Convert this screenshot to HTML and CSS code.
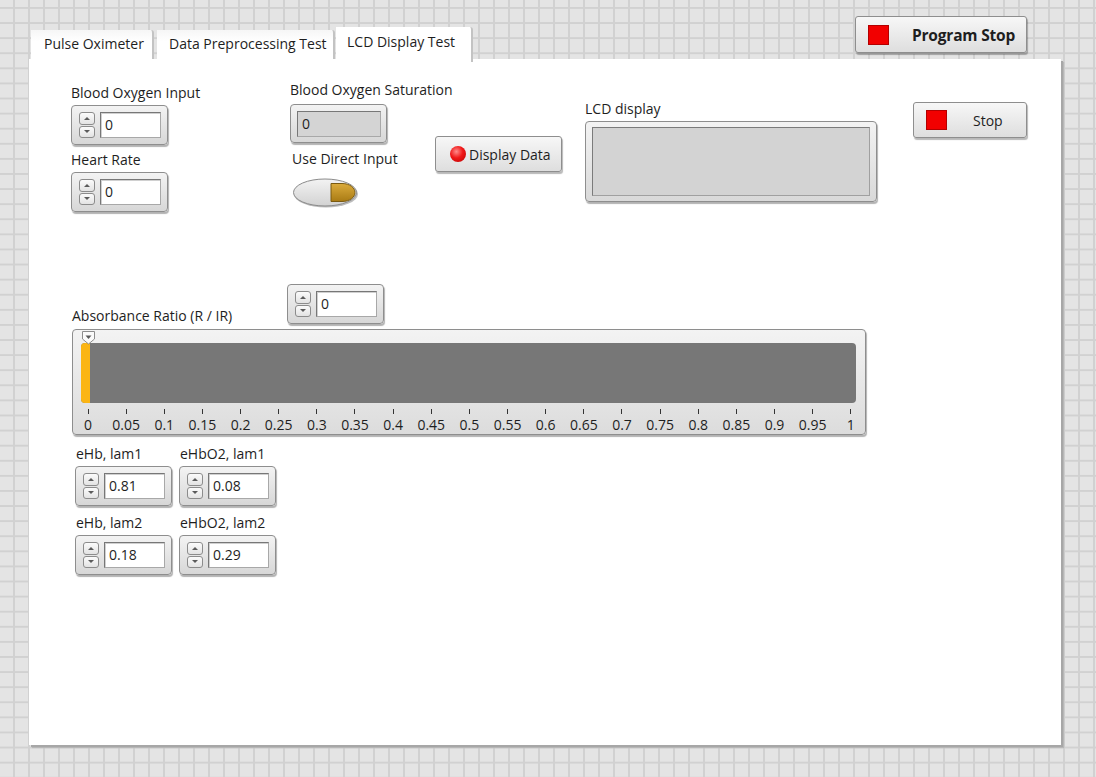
FILE: index.html
```html
<!DOCTYPE html>
<html>
<head>
<meta charset="utf-8">
<title>LCD Display Test</title>
<link rel="stylesheet" href="styles.css">
</head>
<body>
<div class="canvas">

  <button class="btn prog-stop"><span class="red-sq"></span><span class="prog-label">Program Stop</span></button>

  <div class="tabctl">
    <div class="tabrow">
      <div class="tab t1">Pulse Oximeter</div>
      <div class="tab t2">Data Preprocessing Test</div>
      <div class="tab t3 active">LCD Display Test</div>
    </div>
    <div class="panel">

      <div class="grp g-boi">
        <div class="lbl">Blood Oxygen Input</div>
        <div class="num">
          <div class="spin"><span class="sb up"></span><span class="sb dn"></span></div>
          <div class="field">0</div>
        </div>
      </div>

      <div class="grp g-hr">
        <div class="lbl">Heart Rate</div>
        <div class="num">
          <div class="spin"><span class="sb up"></span><span class="sb dn"></span></div>
          <div class="field">0</div>
        </div>
      </div>

      <div class="grp g-bos">
        <div class="lbl">Blood Oxygen Saturation</div>
        <div class="num ind">
          <div class="field">0</div>
        </div>
      </div>

      <div class="grp g-udi">
        <div class="lbl">Use Direct Input</div>
        <svg class="toggle" width="66" height="30" viewBox="0 0 66 30">
          <defs>
            <linearGradient id="tg" x1="0" y1="0" x2="0" y2="1">
              <stop offset="0" stop-color="#f3f3f3"/>
              <stop offset="1" stop-color="#d2d2d2"/>
            </linearGradient>
            <linearGradient id="gold" x1="0" y1="0" x2="0" y2="1">
              <stop offset="0" stop-color="#dbab3c"/>
              <stop offset="1" stop-color="#a97b14"/>
            </linearGradient>
          </defs>
          <ellipse cx="33" cy="16" rx="32" ry="13.5" fill="#bdbdbd"/>
          <ellipse cx="32" cy="14.5" rx="31.5" ry="13.5" fill="url(#tg)" stroke="#8a8a8a"/>
          <path d="M38 5.5 H49 C57 5.5 62 10 62 14.5 C62 19 57 23.5 49 23.5 H38 Z" fill="url(#gold)" stroke="#7a5a10"/>
        </svg>
      </div>

      <button class="btn disp"><span class="led"></span>Display Data</button>

      <div class="grp g-lcd">
        <div class="lbl">LCD display</div>
        <div class="lcd"><div class="lcd-in"></div></div>
      </div>

      <button class="btn stop"><span class="red-sq"></span><span class="stop-label">Stop</span></button>

      <div class="grp g-abs-num">
        <div class="num">
          <div class="spin"><span class="sb up"></span><span class="sb dn"></span></div>
          <div class="field">0</div>
        </div>
      </div>

      <div class="grp g-abs">
        <div class="lbl">Absorbance Ratio (R / IR)</div>
        <div class="slide">
          <svg class="pointer" width="15" height="14" viewBox="0 0 15 14">
            <path d="M1.5 0.5 H13.5 V8 L7.5 13 L1.5 8 Z" fill="#fafafa" stroke="#8c8c8c"/>
            <path d="M4.5 4.5 H10.5 L7.5 8 Z" fill="#5a5a5a"/>
          </svg>
          <div class="track"><div class="fill"></div></div>
          <div class="scale">
            <div class="tk"><i></i><span>0</span></div>
            <div class="tk"><i></i><span>0.05</span></div>
            <div class="tk"><i></i><span>0.1</span></div>
            <div class="tk"><i></i><span>0.15</span></div>
            <div class="tk"><i></i><span>0.2</span></div>
            <div class="tk"><i></i><span>0.25</span></div>
            <div class="tk"><i></i><span>0.3</span></div>
            <div class="tk"><i></i><span>0.35</span></div>
            <div class="tk"><i></i><span>0.4</span></div>
            <div class="tk"><i></i><span>0.45</span></div>
            <div class="tk"><i></i><span>0.5</span></div>
            <div class="tk"><i></i><span>0.55</span></div>
            <div class="tk"><i></i><span>0.6</span></div>
            <div class="tk"><i></i><span>0.65</span></div>
            <div class="tk"><i></i><span>0.7</span></div>
            <div class="tk"><i></i><span>0.75</span></div>
            <div class="tk"><i></i><span>0.8</span></div>
            <div class="tk"><i></i><span>0.85</span></div>
            <div class="tk"><i></i><span>0.9</span></div>
            <div class="tk"><i></i><span>0.95</span></div>
            <div class="tk"><i></i><span>1</span></div>
          </div>
        </div>
      </div>

      <div class="coef">
        <div class="grp2">
          <div class="lbl">eHb, lam1</div>
          <div class="num">
            <div class="spin"><span class="sb up"></span><span class="sb dn"></span></div>
            <div class="field">0.81</div>
          </div>
        </div>
        <div class="grp2">
          <div class="lbl">eHbO2, lam1</div>
          <div class="num">
            <div class="spin"><span class="sb up"></span><span class="sb dn"></span></div>
            <div class="field">0.08</div>
          </div>
        </div>
        <div class="grp2">
          <div class="lbl">eHb, lam2</div>
          <div class="num">
            <div class="spin"><span class="sb up"></span><span class="sb dn"></span></div>
            <div class="field">0.18</div>
          </div>
        </div>
        <div class="grp2">
          <div class="lbl">eHbO2, lam2</div>
          <div class="num">
            <div class="spin"><span class="sb up"></span><span class="sb dn"></span></div>
            <div class="field">0.29</div>
          </div>
        </div>
      </div>

    </div>
  </div>
</div>
</body>
</html>
```

FILE: styles.css
```css
* { box-sizing: border-box; }
html, body { margin: 0; padding: 0; }
body {
  width: 1096px;
  height: 777px;
  overflow: hidden;
  font-family: "Open Sans", "Noto Sans", sans-serif;
  font-size: 14px;
  color: #1e1e1e;
  background-color: #e4e4e4;
  background-image:
    linear-gradient(to right, #d1d1d1 2px, transparent 2px),
    linear-gradient(to bottom, #d1d1d1 2px, transparent 2px);
  background-size: 15px 15.1px;
  background-position: 13px 7px;
}
.canvas { position: relative; width: 1096px; height: 777px; }

/* generic raised button */
.btn {
  font-family: inherit;
  font-size: 14px;
  color: #1e1e1e;
  display: flex;
  align-items: center;
  padding: 0;
  border: 1px solid #8e8e8e;
  border-radius: 3px;
  background: linear-gradient(#f7f7f7, #dedede);
  box-shadow: 1px 2px 1px rgba(0,0,0,0.28);
}
.red-sq {
  display: block;
  width: 21px;
  height: 20px;
  background: #f20000;
  border: 1px solid #b30000;
}

.prog-stop {
  position: absolute;
  left: 855px;
  top: 16px;
  width: 172px;
  height: 37px;
  padding-left: 12px;
}
.prog-label { font-weight: bold; font-size: 15.5px; margin-left: 23px; letter-spacing: -0.2px; }

/* tab control */
.tabctl { position: absolute; left: 29px; top: 27px; }
.tabrow { display: flex; align-items: flex-end; height: 32px; }
.tab {
  height: 29px;
  background: linear-gradient(#f6f6f6, #ffffff 40%);
  border-right: 2px solid #c3c3c3;
  border-top-right-radius: 3px;
  font-size: 14px;
  line-height: 28px;
  white-space: nowrap;
}
.t1 { margin-left: 2px; width: 123px; padding-left: 13px; }
.t2 { margin-left: 3px; width: 178px; padding-left: 12px; }
.t3 { margin-left: 1px; width: 137px; padding-left: 11px; height: 35px; line-height: 30px; margin-bottom: -3px; background: #fff; position: relative; z-index: 1; }

.panel {
  position: relative;
  width: 1032px;
  height: 686px;
  background: #ffffff;
  box-shadow: 2px 2px 0 #a7a7a7, 3px 3px 1px rgba(0,0,0,0.12);
}

/* control groups on the front panel canvas */
.grp { position: absolute; display: flex; flex-direction: column; align-items: flex-start; }
.lbl { height: 18px; line-height: 18px; white-space: nowrap; margin-bottom: 3px; }

.g-boi { left: 42px; top: 25px; }
.g-hr { left: 42px; top: 92px; }
.g-bos { left: 261px; top: 22px; }
.g-bos .lbl { margin-bottom: 5px; }
.g-udi { left: 263px; top: 91px; }
.g-udi .lbl { margin-bottom: 10px; }
.g-lcd { left: 556px; top: 41px; }
.g-abs-num { left: 258px; top: 225px; }
.g-abs { left: 43px; top: 248px; }
.g-abs .lbl { margin-bottom: 4px; }

/* numeric control */
.num {
  display: flex;
  align-items: center;
  width: 97px;
  height: 40px;
  padding-left: 7px;
  border: 1px solid #8e8e8e;
  border-radius: 4px;
  background: linear-gradient(#f3f3f3, #d7d7d7);
  box-shadow: 1px 2px 1px rgba(0,0,0,0.3);
}
.num.ind { height: 39px; padding-left: 6px; }
.spin { display: flex; flex-direction: column; gap: 1px; width: 16px; height: 26px; }
.sb {
  flex: 1;
  display: flex;
  align-items: center;
  justify-content: center;
  border: 1px solid #8c8c8c;
  border-radius: 3px;
  background: linear-gradient(#fbfbfb, #e3e3e3);
}
.sb.up::after { content: ""; border-left: 3px solid transparent; border-right: 3px solid transparent; border-bottom: 3px solid #5b5b5b; }
.sb.dn::after { content: ""; border-left: 3px solid transparent; border-right: 3px solid transparent; border-top: 3px solid #5b5b5b; }
.field {
  margin-left: 5px;
  width: 61px;
  height: 26px;
  background: #fff;
  border: 1px solid #777;
  border-right-color: #a8a8a8;
  border-bottom-color: #a8a8a8;
  box-shadow: inset 1px 1px 0 #d0d0d0;
  padding-left: 4px;
  line-height: 24px;
  font-size: 14px;
}
.ind .field { margin-left: 0; width: 84px; background: #d4d4d4; box-shadow: none; }

/* toggle */
.toggle { display: block; margin-left: 1px; }

/* display data button */
.disp {
  position: absolute;
  left: 406px;
  top: 77px;
  width: 127px;
  height: 36px;
  padding-left: 14px;
}
.led {
  width: 16px;
  height: 16px;
  border-radius: 50%;
  margin-right: 3px;
  background: radial-gradient(circle at 40% 35%, #ff8a8a 0, #f01818 45%, #b80000 100%);
}

/* LCD */
.lcd {
  width: 292px;
  height: 81px;
  padding: 5px 6px;
  border: 1px solid #8e8e8e;
  border-radius: 4px;
  background: linear-gradient(#f3f3f3, #d9d9d9);
  box-shadow: 1px 2px 1px rgba(0,0,0,0.3);
}
.lcd-in {
  width: 100%;
  height: 100%;
  background: #d3d3d3;
  border: 1px solid #7b7b7b;
  border-right-color: #a0a0a0;
  border-bottom-color: #a0a0a0;
}

/* stop button */
.stop {
  position: absolute;
  left: 884px;
  top: 43px;
  width: 114px;
  height: 36px;
  padding-left: 12px;
}
.stop-label { margin-left: 26px; font-size: 14px; }

/* slide */
.slide {
  position: relative;
  width: 794px;
  height: 106px;
  border: 1px solid #8e8e8e;
  border-radius: 4px;
  background: linear-gradient(#f3f3f3, #dcdcdc);
  box-shadow: 1px 2px 1px rgba(0,0,0,0.3);
  padding: 13px 9px 0 8px;
}
.pointer { position: absolute; left: 8px; top: 1px; }
.track {
  height: 60px;
  background: #777777;
  border-radius: 4px;
  overflow: hidden;
}
.fill { width: 9px; height: 100%; background: #fbb514; }
.scale {
  display: flex;
  justify-content: space-between;
  width: 763px;
  margin-left: 7px;
  margin-top: 6px;
}
.tk { width: 0; display: flex; flex-direction: column; align-items: center; }
.tk i { display: block; width: 1px; height: 5px; background: #333; }
.tk span { white-space: nowrap; line-height: 18px; margin-top: 2px; font-size: 14px; }

/* coefficient grid */
.coef {
  position: absolute;
  left: 46px;
  top: 386px;
  display: grid;
  grid-template-columns: 97px 97px;
  column-gap: 7px;
  row-gap: 8px;
}
.grp2 { display: flex; flex-direction: column; }
.grp2 .lbl { margin-left: 1px; }
```
